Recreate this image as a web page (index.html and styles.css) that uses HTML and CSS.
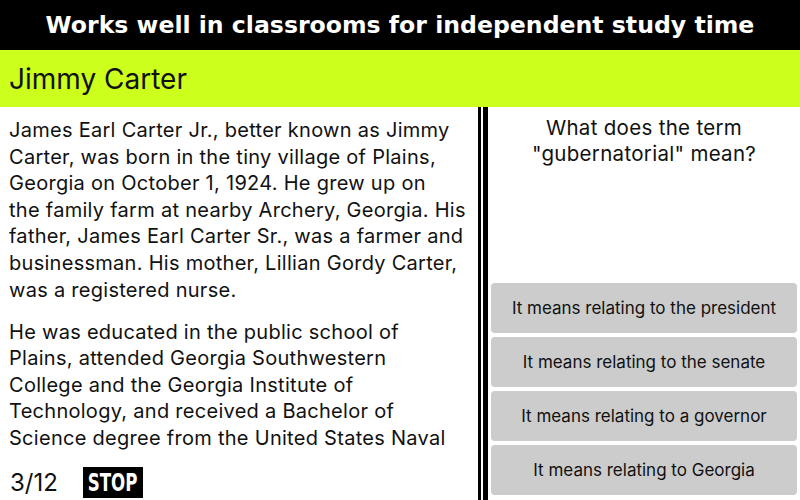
FILE: index.html
```html
<!DOCTYPE html>
<html>
<head>
<meta charset="utf-8">
<link rel="stylesheet" href="styles.css">
</head>
<body>
<div class="banner">Works well in classrooms for independent study time</div>
<div class="titlebar">Jimmy Carter</div>
<div class="main">
  <div class="reader">
    <div class="text">
      <p>James Earl Carter Jr., better known as Jimmy<br>Carter, was born in the tiny village of Plains,<br>Georgia on October 1, 1924. He grew up on<br>the family farm at nearby Archery, Georgia. His<br>father, James Earl Carter Sr., was a farmer and<br>businessman. His mother, Lillian Gordy Carter,<br>was a registered nurse.</p>
      <p>He was educated in the public school of<br>Plains, attended Georgia Southwestern<br>College and the Georgia Institute of<br>Technology, and received a Bachelor of<br>Science degree from the United States Naval</p>
    </div>
    <div class="footer">
      <span class="count">3/12</span>
      <span class="stop"><span class="stop-label">STOP</span></span>
    </div>
  </div>
  <div class="divider"></div>
  <div class="quiz">
    <div class="question">What does the term<br>"gubernatorial" mean?</div>
    <div class="answers">
      <div class="answer">It means relating to the president</div>
      <div class="answer">It means relating to the senate</div>
      <div class="answer">It means relating to a governor</div>
      <div class="answer">It means relating to Georgia</div>
    </div>
  </div>
</div>
</body>
</html>
```
FILE: styles.css
```css
html, body {
  margin: 0;
  padding: 0;
  width: 800px;
  height: 500px;
  overflow: hidden;
  background: #fff;
  font-family: Inter, "Liberation Sans", Arial, sans-serif;
  color: #111;
}
.banner {
  height: 50px;
  background: #000;
  color: #fff;
  font-family: "DejaVu Sans", sans-serif;
  font-weight: bold;
  font-size: 23.6px;
  display: flex;
  align-items: center;
  justify-content: center;
}
.titlebar {
  height: 57px;
  background: #cdff1c;
  display: flex;
  align-items: center;
  padding-left: 9px;
  font-size: 28px;
  color: #111;
}
.main {
  display: flex;
  height: 393px;
}
.reader {
  width: 478px;
  display: flex;
  flex-direction: column;
}
.text {
  flex: 1;
  overflow: hidden;
  padding: 10px 0 0 9px;
  font-size: 20px;
  line-height: 26.6px;
  letter-spacing: 0.28px;
  white-space: nowrap;
}
.text p {
  margin: 0 0 15.5px 0;
}
.footer {
  height: 45px;
  display: flex;
  align-items: center;
  padding-left: 10px;
  padding-top: 9px;
  padding-bottom: 0;
  gap: 25px;
  box-sizing: border-box;
}
.count {
  font-size: 24px;
}
.stop {
  background: #000;
  color: #fff;
  width: 60px;
  height: 31px;
  display: flex;
  align-items: center;
  justify-content: center;
}
.stop-label {
  font-family: "DejaVu Sans Condensed", "DejaVu Sans", sans-serif;
  font-weight: bold;
  font-size: 25px;
  display: inline-block;
  transform: scaleX(0.74);
}
.divider {
  width: 2px;
  border-left: 3px solid #000;
  border-right: 5px solid #000;
  background: #fff;
}
.quiz {
  flex: 1;
  display: flex;
  flex-direction: column;
  justify-content: space-between;
  padding: 8px 3px 5px 3px;
}
.question {
  text-align: center;
  font-size: 20.5px;
  line-height: 26px;
  letter-spacing: 0.3px;
}
.answers {
  display: flex;
  flex-direction: column;
  gap: 4px;
}
.answer {
  height: 50px;
  background: #cccccc;
  border-radius: 4px;
  display: flex;
  align-items: center;
  justify-content: center;
  font-size: 17px;
  color: #111;
}
```
